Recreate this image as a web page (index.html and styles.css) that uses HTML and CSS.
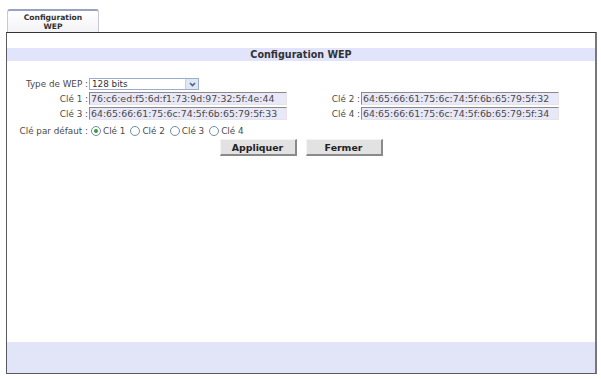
FILE: index.html
```html
<!DOCTYPE html>
<html lang="fr">
<head>
  <meta charset="UTF-8">
  <title>Configuration WEP</title>
  <link rel="stylesheet" href="styles.css">
</head>
<body>
  <div class="tabs">
    <div class="tab">Configuration<br>WEP</div>
  </div>

  <div class="panel">
    <h4 class="band-title">Configuration WEP</h4>

    <form class="wep-form">
      <label class="lbl">Type de WEP :</label>
      <div class="select">
        <span>128 bits</span>
        <span class="arrow">
          <svg width="9" height="9" viewBox="0 0 9 9"><path d="M2 3 L4.5 5.5 L7 3" fill="none" stroke="#4d6185" stroke-width="1.6"/></svg>
        </span>
      </div>
      <span></span><span></span>

      <label class="lbl">Clé 1 :</label>
      <input class="key" type="text" value="76:c6:ed:f5:6d:f1:73:9d:97:32:5f:4e:44">
      <label class="lbl">Clé 2 :</label>
      <input class="key" type="text" value="64:65:66:61:75:6c:74:5f:6b:65:79:5f:32">

      <label class="lbl">Clé 3 :</label>
      <input class="key" type="text" value="64:65:66:61:75:6c:74:5f:6b:65:79:5f:33">
      <label class="lbl">Clé 4 :</label>
      <input class="key" type="text" value="64:65:66:61:75:6c:74:5f:6b:65:79:5f:34">

      <label class="lbl">Clé par défaut :</label>
      <div class="radios">
        <label><input type="radio" name="def" checked> Clé 1</label>
        <label><input type="radio" name="def"> Clé 2</label>
        <label><input type="radio" name="def"> Clé 3</label>
        <label><input type="radio" name="def"> Clé 4</label>
      </div>
    </form>

    <div class="buttons">
      <button type="button">Appliquer</button>
      <button type="button">Fermer</button>
    </div>

    <div class="spacer"></div>
    <div class="footer-band"></div>
  </div>
</body>
</html>
```

FILE: styles.css
```css
body {
  margin: 0;
  background: #ffffff;
  font-family: "DejaVu Sans", Verdana, sans-serif;
  font-size: 8.8px;
  color: #4a4a4a;
}

/* onglet */
.tabs {
  padding: 9px 0 0 7px;
  display: flex;
}

.tab {
  width: 92px;
  height: 23px;
  box-sizing: border-box;
  border-top: 2px solid #9aa0c8;
  border-left: 1px solid #c9c9cf;
  border-right: 1px solid #c9c9cf;
  border-radius: 3px 3px 0 0;
  background: linear-gradient(#ffffff, #f3f3f6);
  font-size: 7.6px;
  font-weight: bold;
  line-height: 9px;
  color: #333;
  text-align: center;
  padding-top: 2px;
}

/* cadre */
.panel {
  margin-left: 6px;
  width: 591px;
  height: 342px;
  box-sizing: border-box;
  border: 1px solid #5a5a62;
  border-top: 1px solid #333;
  border-right: 2px solid #77777e;
  display: flex;
  flex-direction: column;
}

.band-title {
  margin: 15px 0 0 0;
  height: 13px;
  line-height: 13px;
  background: #e1e4fb;
  text-align: center;
  font-size: 9.6px;
  font-weight: bold;
  color: #333;
}

.wep-form {
  margin-top: 17px;
  display: grid;
  grid-template-columns: 82px 199px 73px 197px;
  row-gap: 2px;
  align-items: center;
}

.lbl {
  text-align: right;
  padding-right: 1px;
  white-space: nowrap;
}

.select {
  width: 110px;
  height: 12px;
  box-sizing: border-box;
  border: 1px solid #9aaed0;
  display: flex;
  align-items: center;
  justify-content: space-between;
  padding-left: 2px;
  color: #333;
  background: #fff;
}

.select .arrow {
  width: 12px;
  height: 10px;
  background: #dfe6f6;
  border-left: 1px solid #c3d0ea;
  display: flex;
  align-items: center;
  justify-content: center;
}

.key {
  width: 198px;
  height: 13px;
  box-sizing: border-box;
  margin: 0;
  padding: 0 0 0 1px;
  font-family: "DejaVu Sans", Verdana, sans-serif;
  font-size: 9.4px;
  color: #4a4a4a;
  background: #e8e8f8;
  border: 1px solid;
  border-color: #8a8a8a #e4e4e4 #e4e4e4 #8a8a8a;
  outline: none;
}

.radios {
  grid-column: 2 / 5;
  display: flex;
  align-items: center;
  height: 16px;
  margin-top: 1px;
}

.radios label {
  display: flex;
  align-items: center;
  margin-right: 3px;
}

.radios input {
  appearance: none;
  -webkit-appearance: none;
  width: 10px;
  height: 10px;
  margin: 0 2px 0 2px;
  border: 1px solid #6f8fa2;
  border-radius: 50%;
  background: #fff;
  position: relative;
}

.radios input:checked::after {
  content: "";
  position: absolute;
  left: 2px;
  top: 2px;
  width: 4px;
  height: 4px;
  border-radius: 50%;
  background: #3a9a3a;
}

.buttons {
  display: flex;
  justify-content: center;
  gap: 9px;
}

.buttons button {
  width: 77px;
  height: 17px;
  padding: 0;
  font-family: "DejaVu Sans", Verdana, sans-serif;
  font-size: 9.4px;
  font-weight: bold;
  color: #222;
  background: #e2e2e2;
  border: 1px solid;
  border-color: #f4f4f4 #8a8a8a #8a8a8a #f4f4f4;
  border-width: 1px 2px 2px 1px;
}

.spacer {
  flex: 1;
}

.footer-band {
  height: 31px;
  background: #e2e4f8;
}
```
